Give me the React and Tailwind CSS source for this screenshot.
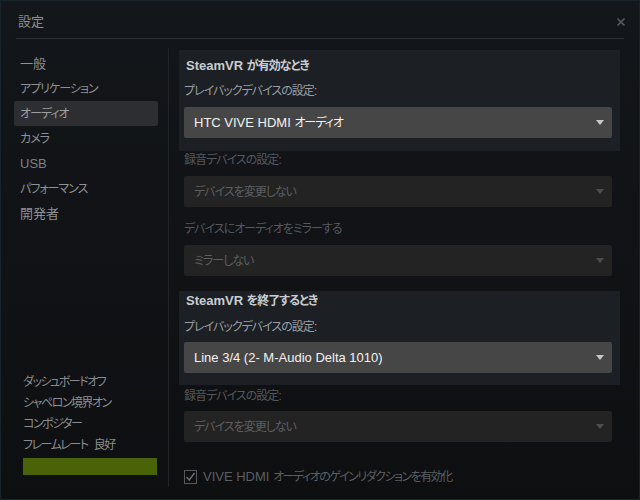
import React from 'react'

const FONT = { fontFamily: '"Liberation Sans", "Noto Sans CJK JP", sans-serif', fontFeatureSettings: '"palt"' }

const navItems = ['一般', 'アプリケーション', 'オーディオ', 'カメラ', 'USB', 'パフォーマンス', '開発者']
const statusItems = ['ダッシュボードオフ', 'シャペロン境界オン', 'コンポジター', 'フレームレート 良好']

// the original UI font has narrow kana; squeeze the Japanese runs only
function Jp({ text, tight }) {
  const parts = text.split(/([\u3000-\u9fff\uff00-\uffef]+)/).filter((p) => p !== '')
  return parts.map((p, i) =>
    /[\u3000-\u9fff\uff00-\uffef]/.test(p) ? (
      <span key={i} className={tight ? 'text-[12px] tracking-[-1.5px]' : 'text-[12px] tracking-[-1px]'}>
        {p}
      </span>
    ) : (
      <span key={i} className={tight ? 'whitespace-pre pl-[3px]' : 'whitespace-pre'}>
        {p}
      </span>
    )
  )
}

function Arrow({ active }) {
  return (
    <svg width="8" height="5" viewBox="0 0 8 5" className="shrink-0">
      <path d="M0 0 H8 L4 5 Z" fill={active ? '#c9c9c9' : '#4e4e4e'} />
    </svg>
  )
}

function Select({ value, active }) {
  return (
    <div
      className={
        active
          ? 'flex h-[31px] items-center justify-between rounded-[2px] bg-[#464646] pl-[10px] pr-[8px] text-[13px] text-[#f2f2f2]'
          : 'flex h-[31px] items-center justify-between rounded-[2px] bg-[#232323] pl-[10px] pr-[8px] text-[13px] text-[#5f5f5f]'
      }
    >
      <span>
        <Jp text={value} />
      </span>
      <Arrow active={active} />
    </div>
  )
}

export default function App() {
  return (
    <div
      className="flex h-[500px] w-[640px] flex-col overflow-hidden border border-[#18232a] bg-gradient-to-b from-[#13161a] to-[#0e0f11]"
      style={FONT}
    >
      {/* title bar */}
      <div className="flex h-[37px] items-center justify-between pl-[17px] pr-[14px] pt-[4px]">
        <span className="text-[13px] text-[#8c8f93]">設定</span>
        <svg width="8" height="8" viewBox="0 0 8 8">
          <path d="M0.5 0.5 L7.5 7.5 M7.5 0.5 L0.5 7.5" stroke="#55585b" strokeWidth="1.6" />
        </svg>
      </div>
      <div className="mx-[15px] h-px bg-[#2a2d31]" />

      <div className="flex flex-1 pt-[9px] pb-[12px]">
        {/* sidebar */}
        <div className="flex w-[168px] flex-col border-r border-[#202327] pl-[13px] pr-[10px] pt-[3px] pb-[12px]">
          {navItems.map((item) => (
            <div
              key={item}
              className={
                item === 'オーディオ'
                  ? 'flex h-[25px] items-center rounded-[2px] bg-[#2c2e31] pl-[6px] text-[13px] text-[#9c9fa2]'
                  : item === 'USB'
                    ? 'flex h-[25px] items-center pl-[6px] text-[13px] text-[#7d8084]'
                    : 'flex h-[25px] items-center pl-[6px] text-[13px] text-[#8e9194]'
              }
            >
              {item === '一般' || item === '開発者' ? item : <Jp text={item} />}
            </div>
          ))}
          <div className="flex-1" />
          <div className="pl-[9px]">
            {statusItems.map((item) => (
              <div key={item} className="flex h-[21px] items-center text-[12px] text-[#8a8d90]">
                <Jp text={item} tight />
              </div>
            ))}
            <div className="mt-[3px] h-[17px] w-[134px] bg-[#4b6308]" />
          </div>
        </div>

        {/* content */}
        <div className="flex flex-1 flex-col pl-[15px] pr-[27px] pt-[2px]">
          <div className="-ml-[5px] -mr-[8px] bg-[#1c2024] pl-[5px] pr-[8px] pt-[8px] pb-[13px]">
            <div className="h-[16px] pl-[2px] text-[13px] font-bold leading-[16px] text-[#c9cdd1]">
              SteamVR <Jp text="が有効なとき" />
            </div>
            <div className="mt-[9px] h-[16px] text-[13px] leading-[16px] text-[#9a9ea2]">
              <Jp text="プレイバックデバイスの設定:" />
            </div>
            <div className="mt-[8px]">
              <Select value="HTC VIVE HDMI オーディオ" active />
            </div>
          </div>

          <div className="mt-[1px] h-[16px] text-[13px] leading-[16px] text-[#55585c]">
            <Jp text="録音デバイスの設定:" />
          </div>
          <div className="mt-[8px]">
            <Select value="デバイスを変更しない" />
          </div>
          <div className="mt-[14px] h-[16px] text-[13px] leading-[16px] text-[#55585c]">
            <Jp text="デバイスにオーディオをミラーする" />
          </div>
          <div className="mt-[8px]">
            <Select value="ミラーしない" />
          </div>

          <div className="-ml-[5px] -mr-[8px] mt-[15px] bg-[#1c2024] pl-[5px] pr-[8px] pt-[2px] pb-[12px]">
            <div className="h-[16px] pl-[2px] text-[13px] font-bold leading-[16px] text-[#c9cdd1]">
              SteamVR <Jp text="を終了するとき" />
            </div>
            <div className="mt-[10px] h-[16px] text-[13px] leading-[16px] text-[#9a9ea2]">
              <Jp text="プレイバックデバイスの設定:" />
            </div>
            <div className="mt-[7px]">
              <Select value="Line 3/4 (2- M-Audio Delta 1010)" active />
            </div>
          </div>

          <div className="mt-[3px] h-[16px] text-[13px] leading-[16px] text-[#55585c]">
            <Jp text="録音デバイスの設定:" />
          </div>
          <div className="mt-[7px]">
            <Select value="デバイスを変更しない" />
          </div>

          <div className="mt-[25px] flex items-center gap-[6px]">
            <svg width="13" height="14" viewBox="0 0 13 14" className="shrink-0">
              <rect x="0.5" y="0.5" width="12" height="13" fill="none" stroke="#55585c" />
              <path d="M2.5 7 L5.2 10 L10.5 3" fill="none" stroke="#6a6d70" strokeWidth="1.5" />
            </svg>
            <span className="text-[13px] text-[#5c5f63]">
              VIVE HDMI <span className="text-[12px] tracking-[-1.5px]">オーディオのゲインリダクションを有効化</span>
            </span>
          </div>
        </div>
      </div>
    </div>
  )
}
